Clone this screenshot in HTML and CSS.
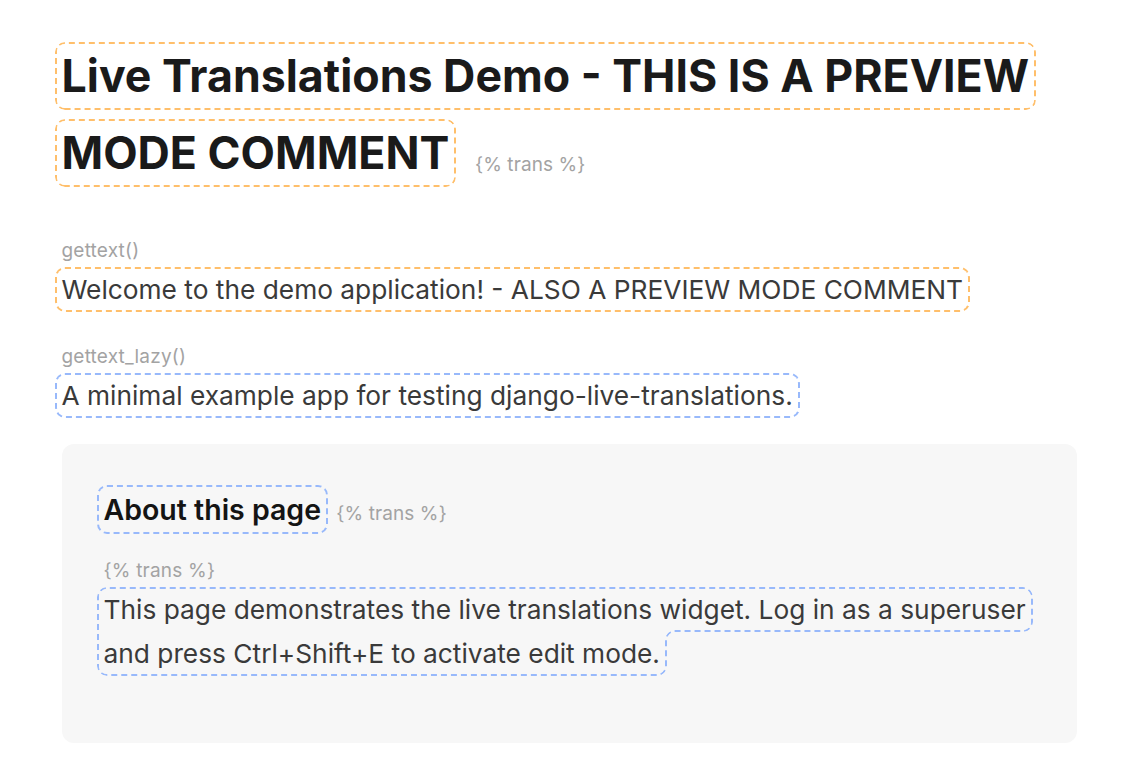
FILE: index.html
```html
<!DOCTYPE html>
<html lang="en">
<head>
<meta charset="utf-8">
<title>Live Translations Demo</title>
<link rel="stylesheet" href="styles.css">
</head>
<body>
<main class="page">
  <h1 class="title"><span class="tr tr-warm">Live Translations Demo - THIS IS A PREVIEW MODE COMMENT</span> <span class="tag tag-title">{% trans %}</span></h1>

  <section class="field field-first">
    <span class="label">gettext()</span>
    <p class="text"><span class="tr tr-warm">Welcome to the demo application! - ALSO A PREVIEW MODE COMMENT</span></p>
  </section>

  <section class="field">
    <span class="label">gettext_lazy()</span>
    <p class="text"><span class="tr tr-cool">A minimal example app for testing django-live-translations.</span></p>
  </section>

  <section class="panel">
    <h2 class="panel-title"><span class="tr tr-cool">About this page</span> <span class="tag tag-sub">{% trans %}</span></h2>
    <span class="label label-panel">{% trans %}</span>
    <p class="text"><span class="tr tr-cool">This page demonstrates the live translations widget. Log in as a superuser and press Ctrl+Shift+E to activate edit mode.</span></p>
  </section>
</main>
</body>
</html>
```

FILE: styles.css
```css
html, body {
  margin: 0;
  padding: 0;
  background: #ffffff;
}

body {
  font-family: "Inter", "Noto Sans", "Liberation Sans", sans-serif;
  color: #333333;
}

.page {
  width: 1015px;
  margin: 0 auto;
  padding-top: 38px;
  padding-bottom: 20px;
}

.title {
  margin: 0;
  font-size: 44.7px;
  line-height: 77px;
  font-weight: 700;
  color: #1a1a1a;
}

.tr {
  outline: 2px dashed;
  outline-offset: 5px;
  border-radius: 3px;
}

.tr-warm {
  outline-color: #ffbf6b;
}

.tr-cool {
  outline-color: #98b9fb;
}

.tag {
  font-size: 19px;
  font-weight: 400;
  letter-spacing: 0.1px;
  color: #a3a3a3;
}

.tag-title {
  margin-left: 15px;
  vertical-align: -2px;
}

.tag-sub {
  margin-left: 8px;
}

.field {
  margin-top: 31px;
}

.field-first {
  margin-top: 34px;
}

.label {
  display: block;
  font-size: 19px;
  letter-spacing: 0.2px;
  line-height: 27px;
  color: #a3a3a3;
  margin-bottom: 4px;
}

.text {
  margin: 0;
  font-size: 26.3px;
  line-height: 44.4px;
  color: #3a3a3a;
}

.panel {
  margin-top: 25px;
  background: #f7f7f7;
  border-radius: 12px;
  padding: 46px 42px 66px;
}

.panel-title {
  margin: 0 0 23px;
  font-size: 28.5px;
  line-height: 40px;
  font-weight: 600;
  color: #141414;
}
```
